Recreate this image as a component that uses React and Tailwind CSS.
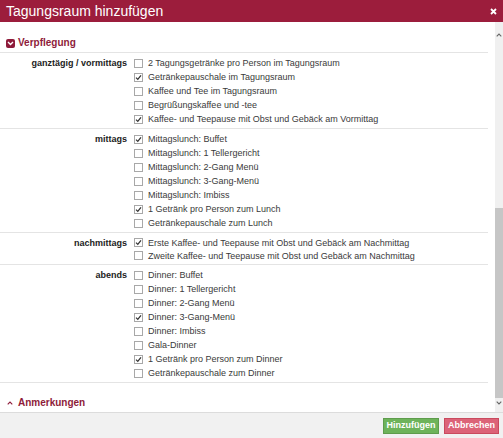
import React from 'react';

const groups = [
    {
        label: 'ganztägig / vormittags',
        items: [
            ['2 Tagungsgetränke pro Person im Tagungsraum', false],
            ['Getränkepauschale im Tagungsraum', true],
            ['Kaffee und Tee im Tagungsraum', false],
            ['Begrüßungskaffee und -tee', false],
            ['Kaffee- und Teepause mit Obst und Gebäck am Vormittag', true],
        ],
    },
    {
        label: 'mittags',
        items: [
            ['Mittagslunch: Buffet', true],
            ['Mittagslunch: 1 Tellergericht', false],
            ['Mittagslunch: 2-Gang Menü', false],
            ['Mittagslunch: 3-Gang-Menü', false],
            ['Mittagslunch: Imbiss', false],
            ['1 Getränk pro Person zum Lunch', true],
            ['Getränkepauschale zum Lunch', false],
        ],
    },
    {
        label: 'nachmittags',
        tight: true,
        items: [
            ['Erste Kaffee- und Teepause mit Obst und Gebäck am Nachmittag', true],
            ['Zweite Kaffee- und Teepause mit Obst und Gebäck am Nachmittag', false],
        ],
    },
    {
        label: 'abends',
        items: [
            ['Dinner: Buffet', false],
            ['Dinner: 1 Tellergericht', false],
            ['Dinner: 2-Gang Menü', false],
            ['Dinner: 3-Gang-Menü', true],
            ['Dinner: Imbiss', false],
            ['Gala-Dinner', false],
            ['1 Getränk pro Person zum Dinner', true],
            ['Getränkepauschale zum Dinner', false],
        ],
    },
];

// kleine Checkbox wie im Original (grauer Rahmen, Haken dunkel)
const Box = ({ checked }) => (
    <span className="flex h-[9px] w-[9px] shrink-0 items-center justify-center border border-[#a8a8a8] bg-white">
        {checked && (
            <svg width="7" height="7" viewBox="0 0 7 7" aria-hidden="true">
                <path d="M1 3.6 L2.8 5.4 L6 1.4" fill="none" stroke="#333" strokeWidth="1.3" />
            </svg>
        )}
    </span>
);

const Group = ({ label, items, tight }) => (
    <div className="flex border-b border-[#e4e4e4] pt-[3px] pb-[2px]">
        <div className="h-[14px] w-[127px] shrink-0 text-right text-[9px] leading-[14px] font-bold text-[#222]">
            {label}
        </div>
        <div className="ml-[7px] flex flex-col">
            {items.map(([text, checked]) => (
                <div
                    key={text}
                    className={`flex items-center gap-[5px] ${tight ? 'h-[13px]' : 'h-[14px]'}`}
                >
                    <Box checked={checked} />
                    <span className="text-[9px] leading-[14px] text-[#3a3a3a]">{text}</span>
                </div>
            ))}
        </div>
    </div>
);

const App = () => {
    return (
        <div className="flex h-[438px] w-[503px] flex-col overflow-hidden bg-white font-['Liberation_Sans',Arial,sans-serif]">
            {/* Titelleiste */}
            <div className="flex h-[22px] shrink-0 items-center justify-between bg-[#9c1d3c] pl-[6px] pr-[6px]">
                <span className="text-[14px] leading-none text-white">Tagungsraum hinzufügen</span>
                <svg width="7" height="7" viewBox="0 0 7 7" aria-hidden="true">
                    <path d="M1 1 L6 6 M6 1 L1 6" stroke="#fff" strokeWidth="1.8" />
                </svg>
            </div>

            <div className="flex min-h-0 flex-1">
                {/* Inhalt */}
                <div className="mr-[7px] flex w-[488px] flex-col">
                    <div className="mt-[14px] flex h-[14px] items-center gap-[3px] pl-[6px]">
                        <span className="flex h-[9px] w-[9px] items-center justify-center rounded-[2px] bg-[#8e1b3a]">
                            <svg width="7" height="5" viewBox="0 0 7 5" aria-hidden="true">
                                <path d="M1 1 L3.5 3.5 L6 1" fill="none" stroke="#fff" strokeWidth="1.4" />
                            </svg>
                        </span>
                        <span className="text-[10px] leading-[14px] font-bold text-[#8e1b3a]">Verpflegung</span>
                    </div>
                    <div className="mt-[2px] border-b border-[#e4e4e4]" />

                    {groups.map((g) => (
                        <Group key={g.label} {...g} />
                    ))}

                    <div className="mt-[13px] flex h-[14px] items-center gap-[5px] pl-[7px]">
                        <svg width="6" height="4" viewBox="0 0 6 4" aria-hidden="true">
                            <path d="M0.7 3.3 L3 1 L5.3 3.3" fill="none" stroke="#8e1b3a" strokeWidth="1.1" />
                        </svg>
                        <span className="text-[10px] leading-[14px] font-bold text-[#8e1b3a]">Anmerkungen</span>
                    </div>
                </div>

                {/* Scrollbalken */}
                <div className="flex w-[8px] flex-col bg-[#f0f0f0]">
                    <div className="flex h-[186px] justify-center pt-[11px]">
                        <svg width="6" height="4" viewBox="0 0 6 4" aria-hidden="true">
                            <path d="M0.7 3.3 L3 1 L5.3 3.3" fill="none" stroke="#666" strokeWidth="1.1" />
                        </svg>
                    </div>
                    <div className="h-[190px] bg-[#c6c6c6]" />
                    <div className="flex flex-1 justify-center pt-[3px]">
                        <svg width="6" height="4" viewBox="0 0 6 4" aria-hidden="true">
                            <path d="M0.7 0.7 L3 3 L5.3 0.7" fill="none" stroke="#666" strokeWidth="1.1" />
                        </svg>
                    </div>
                </div>
            </div>

            {/* Fußleiste */}
            <div className="flex h-[26px] shrink-0 items-center justify-end gap-[5px] border-t border-[#dcdcdc] bg-[#f1f1f1] pr-[4px]">
                <button className="h-[16px] w-[56px] border border-[#5e9c4c] bg-[#6db35a] text-[9px] leading-none font-bold text-white">
                    Hinzufügen
                </button>
                <button className="h-[16px] w-[55px] border border-[#c94a5e] bg-[#dc6378] text-[9px] leading-none font-bold text-white">
                    Abbrechen
                </button>
            </div>
        </div>
    );
};

export default App;
